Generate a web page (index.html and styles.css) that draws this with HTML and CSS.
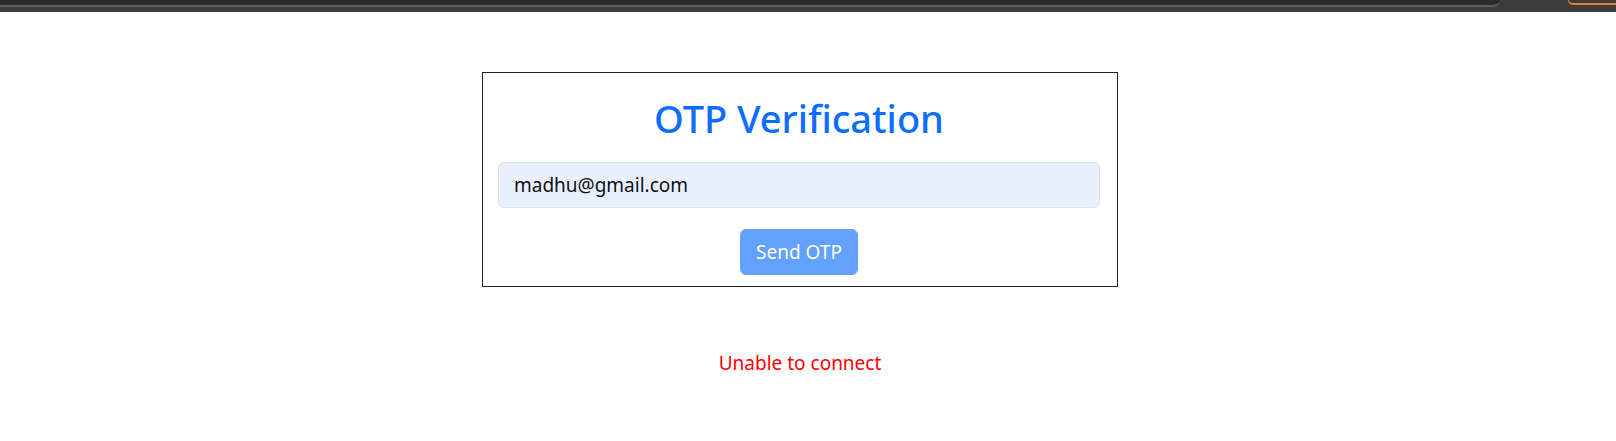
FILE: index.html
```html
<!DOCTYPE html>
<html lang="en">
<head>
<meta charset="utf-8">
<title>OTP Verification</title>
<link rel="stylesheet" href="styles.css">
</head>
<body>
<div class="chrome">
  <div class="chrome-field"></div>
  <div class="chrome-accent"></div>
</div>
<main class="page">
  <section class="card">
    <h1 class="title">OTP Verification</h1>
    <input class="email" type="email" value="madhu@gmail.com">
    <button class="send" type="button" disabled>Send OTP</button>
  </section>
  <p class="error">Unable to connect</p>
</main>
</body>
</html>
```

FILE: styles.css
```css
* { box-sizing: border-box; }
html, body { margin: 0; padding: 0; background: #fff; }
body { font-family: "Noto Sans", "Open Sans", sans-serif; color: #212529; }

.chrome {
  height: 12px;
  background: #3c3c3c;
  display: flex;
  align-items: flex-start;
}
.chrome-field {
  flex: 0 0 1500px;
  height: 7px;
  background: #2b2b2b;
  border-bottom: 2px solid #5e5e5e;
  border-bottom-right-radius: 8px;
}
.chrome-accent {
  margin-left: auto;
  width: 48px;
  height: 5px;
  border-left: 1px solid #e2803c;
  border-bottom: 2px solid #e2803c;
  border-bottom-left-radius: 8px;
}

.page {
  width: 1600px;
  display: flex;
  flex-direction: column;
  align-items: center;
  padding-top: 60px;
}

.card {
  width: 636px;
  border: 1px solid #222;
  padding: 0 17px 11px 15px;
  display: flex;
  flex-direction: column;
  align-items: center;
}

.title {
  margin: 23px 0 0;
  height: 45px;
  font-size: 38px;
  font-weight: 500;
  line-height: 45px;
  color: #0d6efd;
}

.email {
  margin-top: 21px;
  width: 100%;
  height: 46px;
  padding: 0 15px;
  font-family: inherit;
  font-size: 19px;
  color: #111;
  background: #e8f0fe;
  border: 1px solid #dee2e6;
  border-radius: 6px;
  outline: none;
}

.send {
  margin-top: 21px;
  height: 46px;
  padding: 0 15px;
  font-family: inherit;
  font-size: 19px;
  color: #fff;
  background: #62a1fe;
  border: 1px solid #62a1fe;
  border-radius: 6px;
}

.error {
  margin: 62px 0 0;
  font-size: 19px;
  line-height: 1.5;
  color: #ff0000;
}
```
